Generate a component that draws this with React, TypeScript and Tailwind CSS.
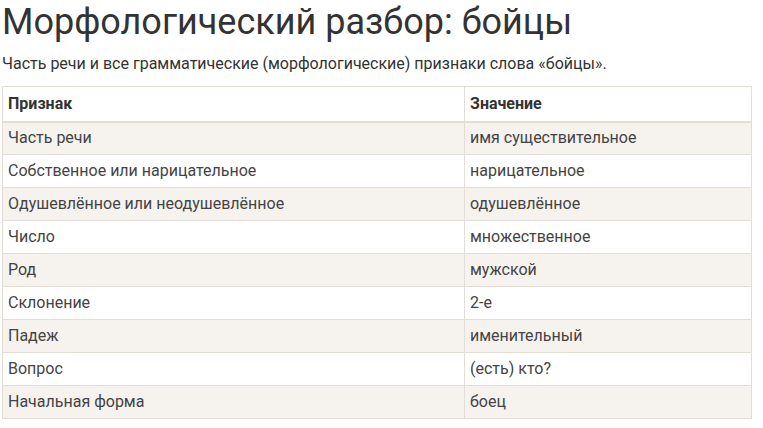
const ROWS: [string, string][] = [
  ["Часть речи", "имя существительное"],
  ["Собственное или нарицательное", "нарицательное"],
  ["Одушевлённое или неодушевлённое", "одушевлённое"],
  ["Число", "множественное"],
  ["Род", "мужской"],
  ["Склонение", "2-е"],
  ["Падеж", "именительный"],
  ["Вопрос", "(есть) кто?"],
  ["Начальная форма", "боец"],
];

export default function App() {
  return (
    <div className="w-[763px] h-[428px] bg-white overflow-hidden font-['Roboto',sans-serif] text-[#333]">
      <h1 className="pl-[2px] pt-[0px] text-[36px] leading-[44px] font-normal text-[#333]">
        Морфологический разбор: бойцы
      </h1>
      <p className="pl-[2px] mt-[10px] text-[16px] leading-[20px] text-[#333]">
        Часть речи и все грамматические (морфологические) признаки слова «бойцы».
      </p>
      <table className="ml-[2px] mt-[12px] w-[750px] border-collapse border border-[#e2ddd6] text-[16px] text-[#444]">
        <thead>
          <tr className="h-[35px] border-b-2 border-[#e2ddd6]">
            <th className="w-[462px] px-[5px] text-left font-bold text-[#333] border-r border-[#e2ddd6]">Признак</th>
            <th className="px-[5px] text-left font-bold text-[#333]">Значение</th>
          </tr>
        </thead>
        <tbody>
          {ROWS.map(([k, v], i) => (
            <tr key={k} className={`h-[33px] border-b border-[#e2ddd6] ${i % 2 === 0 ? "bg-[#f6f3ef]" : "bg-white"}`}>
              <td className="px-[5px] border-r border-[#e2ddd6]">{k}</td>
              <td className="px-[5px]">{v}</td>
            </tr>
          ))}
        </tbody>
      </table>
    </div>
  );
}
